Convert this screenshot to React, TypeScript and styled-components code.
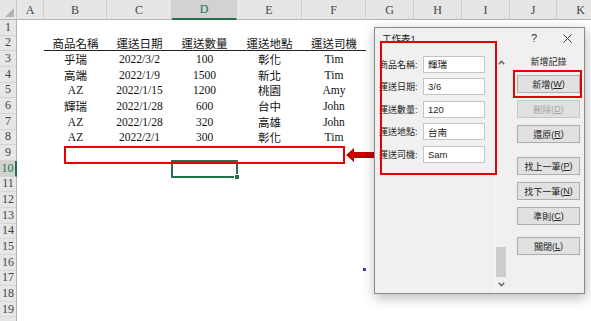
import React from 'react'
import styled, { createGlobalStyle } from 'styled-components'

const GlobalStyle = createGlobalStyle`
  html, body { margin: 0; padding: 0; background: #fff; }
  body { width: 591px; height: 321px; overflow: hidden; }
`

const letters = ['A', 'B', 'C', 'D', 'E', 'F', 'G', 'H', 'I', 'J', 'K']
const colWidths = [27, 63, 65, 65, 65, 64, 48, 48, 48, 47, 48]

const heading = ['商品名稱', '運送日期', '運送數量', '運送地點', '運送司機']
const records = [
  ['乎瑞', '2022/3/2', '100', '彰化', 'Tim'],
  ['高端', '2022/1/9', '1500', '新北', 'Tim'],
  ['AZ', '2022/1/15', '1200', '桃園', 'Amy'],
  ['輝瑞', '2022/1/28', '600', '台中', 'John'],
  ['AZ', '2022/1/28', '320', '高雄', 'John'],
  ['AZ', '2022/2/1', '300', '彰化', 'Tim'],
]

const fields = [
  { label: '商品名稱', value: '輝瑞' },
  { label: '運送日期', value: '3/6' },
  { label: '運送數量', value: '120' },
  { label: '運送地點', value: '台南' },
  { label: '運送司機', value: 'Sam' },
]

const buttons = [
  { text: '新增', key: 'W', gap: 6 },
  { text: '刪除', key: 'D', gap: 7, disabled: true },
  { text: '還原', key: 'R', gap: 7 },
  { text: '找上一筆', key: 'P', gap: 14 },
  { text: '找下一筆', key: 'N', gap: 7 },
  { text: '準則', key: 'C', gap: 7 },
  { text: '關閉', key: 'L', gap: 12 },
]

const Page = styled.div`
  position: relative;
  width: 591px;
  height: 321px;
  overflow: hidden;
  background: #fff;
`

const Sheet = styled.div`
  display: grid;
  grid-template-columns: 17px ${colWidths.map((w) => w + 'px').join(' ')};
  grid-template-rows: 20px;
  grid-auto-rows: 15.67px;
  font-family: "Liberation Serif", "Noto Sans CJK TC", serif;
`

const Corner = styled.div`
  background: #e6e6e6;
  border-right: 1px solid #c8c8c8;
  border-bottom: 1px solid #b4b4b4;
  display: flex;
  align-items: flex-end;
  justify-content: flex-end;
  padding: 0 2px 2px 0;
  box-sizing: border-box;
`

const ColHead = styled.div<{ $active?: boolean }>`
  background: ${(p) => (p.$active ? '#d2d2d2' : '#e6e6e6')};
  color: ${(p) => (p.$active ? '#217346' : '#444')};
  border-right: 1px solid #d0d0d0;
  border-bottom: ${(p) => (p.$active ? '2px solid #217346' : '1px solid #b4b4b4')};
  box-sizing: border-box;
  display: flex;
  align-items: center;
  justify-content: center;
  font-size: 12px;
  padding-top: 1px;
`

const RowHead = styled.div<{ $active?: boolean }>`
  background: ${(p) => (p.$active ? '#d2d2d2' : '#e6e6e6')};
  color: ${(p) => (p.$active ? '#217346' : '#444')};
  border-bottom: 1px solid #d4d4d4;
  border-right: ${(p) => (p.$active ? '2px solid #217346' : '1px solid #b4b4b4')};
  box-sizing: border-box;
  display: flex;
  align-items: center;
  justify-content: center;
  font-size: 12px;
`

const Cell = styled.div<{ $underline?: boolean; $selected?: boolean }>`
  position: relative;
  display: flex;
  align-items: center;
  justify-content: center;
  box-sizing: border-box;
  font-size: 11.5px;
  color: #111;
  white-space: nowrap;
  border-bottom: ${(p) => (p.$underline ? '1px solid #222' : 'none')};
  outline: ${(p) => (p.$selected ? '2px solid #217346' : 'none')};
  outline-offset: -1px;
  &::after {
    content: '';
    display: ${(p) => (p.$selected ? 'block' : 'none')};
    position: absolute;
    right: -3px;
    bottom: -3px;
    width: 4px;
    height: 4px;
    background: #217346;
    border: 1px solid #fff;
  }
`

const Mark = styled.div<{ $x: number; $y: number; $w: number; $h: number }>`
  position: absolute;
  left: ${(p) => p.$x}px;
  top: ${(p) => p.$y}px;
  width: ${(p) => p.$w}px;
  height: ${(p) => p.$h}px;
  border: 2px solid #e60000;
  box-sizing: border-box;
  pointer-events: none;
`

const Arrow = styled.svg`
  position: absolute;
  left: 345px;
  top: 145px;
`

const Dot = styled.div`
  position: absolute;
  left: 363px;
  top: 268px;
  width: 3px;
  height: 3px;
  background: #3346a8;
`

const Dialog = styled.div`
  position: absolute;
  left: 374px;
  top: 27px;
  width: 211px;
  height: 267px;
  box-sizing: border-box;
  background: #f0f0f0;
  border: 1px solid #8a8a8a;
  box-shadow: 1px 4px 12px rgba(0, 0, 0, 0.28);
  font-family: "Liberation Sans", "Noto Sans CJK TC", sans-serif;
  color: #1e1e1e;
  display: flex;
  flex-direction: column;
`

const TitleBar = styled.div`
  height: 20px;
  display: flex;
  align-items: center;
  padding-left: 7px;
  font-size: 9.5px;
  flex-shrink: 0;
`

const Title = styled.span`
  flex: 1;
`

const TitleIcons = styled.div`
  display: flex;
  align-items: center;
  gap: 26px;
  padding-right: 12px;
  font-size: 11px;
  color: #333;
`

const Body = styled.div`
  flex: 1;
  display: flex;
`

const FormPane = styled.div`
  width: 119px;
  padding-top: 5px;
  box-sizing: border-box;
  display: flex;
  flex-direction: column;
`

const FieldRow = styled.div`
  height: 22.5px;
  display: flex;
  align-items: center;
  padding-left: 4px;
`

const FieldLabel = styled.span`
  width: 44px;
  font-size: 9px;
  white-space: nowrap;
`

const FieldInput = styled.div`
  width: 62px;
  height: 17px;
  box-sizing: border-box;
  background: #fff;
  border: 1px solid #c4c4c4;
  font-size: 9.5px;
  padding-left: 4px;
  display: flex;
  align-items: center;
`

const ScrollBar = styled.div`
  width: 13px;
  box-sizing: border-box;
  border-left: 1px solid #fbfbfb;
  display: flex;
  flex-direction: column;
  align-items: center;
  padding: 7px 0 2px;
`

const ScrollArrow = styled.div`
  height: 14px;
  display: flex;
  align-items: center;
  justify-content: center;
`

const ScrollTrack = styled.div`
  flex: 1;
  align-self: stretch;
  display: flex;
  flex-direction: column;
  justify-content: flex-end;
  padding: 0 1px;
`

const ScrollThumb = styled.div`
  height: 30px;
  background: #cdcdcd;
`

const ActionPane = styled.div`
  flex: 1;
  padding: 7px 0 0 10px;
  display: flex;
  flex-direction: column;
`

const Caption = styled.div`
  width: 63px;
  height: 14px;
  line-height: 14px;
  text-align: center;
  font-size: 9px;
`

const ActionButton = styled.div<{ $gap: number; $disabled?: boolean }>`
  margin-top: ${(p) => p.$gap}px;
  width: 63px;
  height: 18px;
  box-sizing: border-box;
  background: #e1e1e1;
  border: 1px solid ${(p) => (p.$disabled ? '#c6c6c6' : '#adadad')};
  color: ${(p) => (p.$disabled ? '#a3a3a3' : '#222')};
  font-size: 9px;
  display: flex;
  align-items: center;
  justify-content: center;
  u { text-underline-offset: 1px; }
`

const Chevron = ({ up }: { up?: boolean }) => (
  <svg width="7" height="5" viewBox="0 0 7 5">
    <path
      d={up ? 'M0.8 4.2 L3.5 1.2 L6.2 4.2' : 'M0.8 0.8 L3.5 3.8 L6.2 0.8'}
      fill="none"
      stroke="#5a5a5a"
      strokeWidth="1.3"
    />
  </svg>
)

function cellProps(row: number, col: number) {
  return {
    $underline: row === 2 && col >= 1 && col <= 5,
    $selected: row === 10 && col === 3,
  }
}

function cellText(row: number, col: number) {
  if (col < 1 || col > 5) return ''
  if (row === 2) return heading[col - 1]
  if (row >= 3 && row <= 8) return records[row - 3][col - 1]
  return ''
}

export default function App() {
  // row 20 only peeks in at the bottom edge, so it gets no label
  const rows = Array.from({ length: 20 }, (_, i) => i + 1)
  return (
    <Page>
      <GlobalStyle />
      <Sheet>
        <Corner>
          <svg width="9" height="9" viewBox="0 0 9 9">
            <polygon points="9,0 9,9 0,9" fill="#b4b4b4" />
          </svg>
        </Corner>
        {letters.map((l) => (
          <ColHead key={l} $active={l === 'D'}>
            {l}
          </ColHead>
        ))}
        {rows.map((r) => (
          <React.Fragment key={r}>
            <RowHead $active={r === 10}>{r < 20 ? r : ''}</RowHead>
            {letters.map((l, c) => (
              <Cell key={l} {...cellProps(r, c)}>
                {cellText(r, c)}
              </Cell>
            ))}
          </React.Fragment>
        ))}
      </Sheet>

      <Mark $x={64} $y={146} $w={281} $h={18} />
      <Arrow width="30" height="20" viewBox="0 0 30 20">
        <polygon points="1,10 9,3 9,7 30,7 30,13 9,13 9,17" fill="#c00000" />
      </Arrow>
      <Dot />

      <Dialog>
        <TitleBar>
          <Title>工作表1</Title>
          <TitleIcons>
            <span>?</span>
            <svg width="9" height="9" viewBox="0 0 9 9">
              <path d="M0.5 0.5 L8.5 8.5 M8.5 0.5 L0.5 8.5" stroke="#333" strokeWidth="1" />
            </svg>
          </TitleIcons>
        </TitleBar>
        <Body>
          <FormPane>
            {fields.map((f) => (
              <FieldRow key={f.label}>
                <FieldLabel>{f.label}:</FieldLabel>
                <FieldInput>{f.value}</FieldInput>
              </FieldRow>
            ))}
          </FormPane>
          <ScrollBar>
            <ScrollArrow>
              <Chevron up />
            </ScrollArrow>
            <ScrollTrack>
              <ScrollThumb />
            </ScrollTrack>
            <ScrollArrow>
              <Chevron />
            </ScrollArrow>
          </ScrollBar>
          <ActionPane>
            <Caption>新增記錄</Caption>
            {buttons.map((b) => (
              <ActionButton key={b.key} $gap={b.gap} $disabled={b.disabled}>
                {b.text}(<u>{b.key}</u>)
              </ActionButton>
            ))}
          </ActionPane>
        </Body>
        <Mark $x={5} $y={13} $w={117} $h={134} />
        <Mark $x={138} $y={42} $w={69} $h={28} />
      </Dialog>
    </Page>
  )
}
